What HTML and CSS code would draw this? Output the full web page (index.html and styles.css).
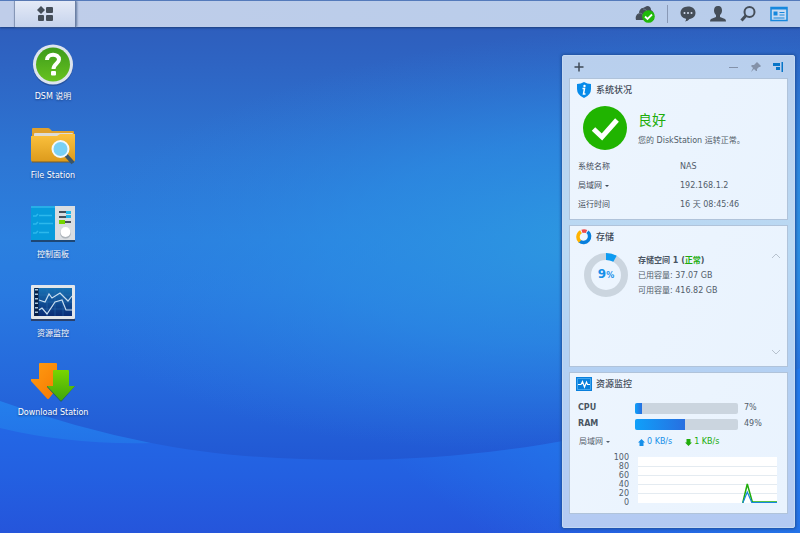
FILE: index.html
```
<!DOCTYPE html>
<html lang="zh-CN">
<head>
<meta charset="utf-8">
<title>DiskStation</title>
<link rel="stylesheet" href="styles.css">
</head>
<body>
<svg class="wallpaper" viewBox="0 0 800 533" preserveAspectRatio="none" aria-hidden="true">
  <defs>
    <linearGradient id="sky" x1="0" y1="0" x2="0" y2="1">
      <stop offset="0" stop-color="#2e5ab8"/><stop offset=".12" stop-color="#2e64c3"/><stop offset=".3" stop-color="#2d76d4"/><stop offset=".45" stop-color="#2b80df"/><stop offset=".55" stop-color="#297ae1"/><stop offset=".72" stop-color="#2568dc"/><stop offset=".87" stop-color="#2157d3"/>
    </linearGradient>
    <radialGradient id="glow" gradientUnits="userSpaceOnUse" cx="0" cy="0" r="1" gradientTransform="translate(610 238) rotate(-4) scale(560 210)">
      <stop offset="0" stop-color="#2d9ae0" stop-opacity=".95"/><stop offset=".5" stop-color="#2b8fe4" stop-opacity=".6"/><stop offset="1" stop-color="#2b80e0" stop-opacity="0"/>
    </radialGradient>
    <linearGradient id="strip" gradientUnits="userSpaceOnUse" x1="0" y1="400" x2="0" y2="445">
      <stop offset="0" stop-color="#247fec"/><stop offset="1" stop-color="#2373e8"/>
    </linearGradient>
    <linearGradient id="floor" gradientUnits="userSpaceOnUse" x1="0" y1="420" x2="0" y2="533">
      <stop offset="0" stop-color="#2368e6"/><stop offset=".5" stop-color="#2360e1"/><stop offset="1" stop-color="#2555db"/>
    </linearGradient>
    <linearGradient id="rise" gradientUnits="userSpaceOnUse" x1="480" y1="533" x2="600" y2="380">
      <stop offset="0" stop-color="#2386f0" stop-opacity="0"/><stop offset="1" stop-color="#2386f0" stop-opacity=".6"/>
    </linearGradient>
  </defs>
  <rect width="800" height="533" fill="url(#sky)"/>
  <rect width="800" height="533" fill="url(#glow)"/>
  <path d="M0 401Q75 428 151 443V450H0Z" fill="url(#strip)"/>
  <path d="M0 428Q70 445 151 443C210 455 280 460 350 460C520 460 680 424 800 368V533H0Z" fill="url(#floor)"/>
  <path d="M151 443C210 455 280 460 350 460C520 460 680 424 800 368V533H151Z" fill="url(#rise)"/>
</svg>

<header class="taskbar">
  <button class="menu-button" aria-label="主菜单">
    <svg width="16" height="16" viewBox="0 0 16 16" fill="#454e59"><path d="M4 0l4 4-4 4-4-4z"/><rect x="9" y="1" width="7" height="6" rx="1"/><rect x="1" y="9" width="6" height="6" rx="1"/><rect x="9" y="9" width="7" height="6" rx="1"/></svg>
  </button>
  <nav class="tray">
    <button aria-label="同步状态"><svg width="20" height="18" viewBox="0 0 20 18"><path d="M1 15C0 11 2 9 4 8C4 5 6 3 8 3L12 1C15 1 16 3 16 5C18 6 19 8 19 11V15Z" fill="#454e59"/><path d="M3 9C6 7 8 9 8 12M8 4c3 0 4 2 4 3" fill="none" stroke="#8794a8" stroke-width=".6"/><circle cx="13.500" cy="11.500" r="6.300" fill="#20b90a"/><path d="M10 11.500l2.500 2.500 4.500-4.500" fill="none" stroke="#fff" stroke-width="1.800"/></svg></button>
    <span class="divider"></span>
    <button aria-label="通知"><svg width="16" height="16" viewBox="0 0 16 16"><path d="M8 .5c4.500 0 7.500 2.600 7.500 6.200S13 12.500 9.500 13Q8 15 5 15.500Q6.500 14 6 12.700C2.500 12 .5 10 .5 7C.5 3.300 3.500 .5 8 .5Z" fill="#454e59"/><g fill="#d4def0"><circle cx="4.500" cy="7" r="1"/><circle cx="8" cy="7" r="1"/><circle cx="11.500" cy="7" r="1"/></g></svg></button>
    <button aria-label="用户"><svg width="16" height="16" viewBox="0 0 16 16"><path d="M8 0c3 0 4 2 4 4.500C12 7 11 8 10 9v2l5 2q1 .5 1 2.500H0Q0 13.500 1 13l5-2V9C5 8 4 7 4 4.500C4 2 5 0 8 0Z" fill="#454e59"/></svg></button>
    <button aria-label="搜索"><svg width="16" height="16" viewBox="0 0 16 16" fill="none" stroke="#454e59"><circle cx="9.500" cy="6" r="5" stroke-width="2"/><path d="M6 9.500L1.500 14.500" stroke-width="3"/></svg></button>
    <button aria-label="小组件"><svg width="18" height="16" viewBox="0 0 18 16"><rect x="1" y="1.500" width="16" height="13" fill="#c7daf2" stroke="#1688dd" stroke-width="1.500"/><path d="M1 2.500h16" stroke="#1688dd" stroke-width="2"/><rect x="3.500" y="5.500" width="4" height="4" fill="#1688dd"/><path d="M9.500 6.500h5M9.500 9h5M3.500 12h11" stroke="#1688dd"/></svg></button>
  </nav>
</header>

<main class="desktop">
  <nav class="shortcuts">
    <a class="shortcut" href="#help">
      <svg width="44" height="44" viewBox="0 0 44 44"><defs><linearGradient id="green" x1="0" y1="0" x2="0" y2="1"><stop offset="0" stop-color="#3d9b1c"/><stop offset="1" stop-color="#67c21f"/></linearGradient></defs><circle cx="22" cy="23" r="20" fill="#1f3f7c" opacity=".5"/><circle cx="22" cy="21.500" r="20" fill="#dde4ee"/><circle cx="22" cy="21.500" r="17" fill="url(#green)"/><path d="M16 17C16 10 28 10 28 16.500C28 20.500 22.500 20.500 22.500 26" fill="none" stroke="#fff" stroke-width="4"/><rect x="20" y="28" width="5" height="4.500" rx="1" fill="#fff"/></svg>
      <span>DSM 说明</span>
    </a>
    <a class="shortcut" href="#files">
      <svg width="44" height="44" viewBox="0 0 44 44"><defs><linearGradient id="folder" x1="0" y1="0" x2="0" y2="1"><stop offset="0" stop-color="#fcc23e"/><stop offset="1" stop-color="#dc9a1c"/></linearGradient></defs><path d="M1 38V7q0-1 1-1h15q1 0 2 1l2 2h21q1 0 1 1v28Z" fill="#dfa02c"/><path d="M3 12q0-1 1-1h37q1 0 1 1v5H3Z" fill="#dddcd8"/><path d="M0 14h26l3-2h15v26q0 2-2 2H2q-2 0-2-2Z" fill="url(#folder)"/><path d="M1 40h42" stroke="#795d2a"/><path d="M34 32l8 9" stroke="#3b5568" stroke-width="4"/><circle cx="29.500" cy="27" r="8" fill="#79d0f5" stroke="#f3f8fb" stroke-width="2"/></svg>
      <span>File Station</span>
    </a>
    <a class="shortcut" href="#control">
      <svg width="44" height="44" viewBox="0 0 44 44"><path d="M0 38h44v3H0z" fill="#1e4775"/><path d="M0 5h25v34H0z" fill="#079bdc"/><path d="M0 5h25v2H0z" fill="#28aee7"/><path d="M24 5h20v34H24z" fill="#d9dde1"/><path d="M2 15h3l2-2M8 14.500h13M2 23h3l2-2M8 22.500h14M2 32h3l2-2M8 31.500h10" stroke="#2cb8ec" stroke-width="1.500" fill="none"/><g fill="#46505a"><path d="M28 10h7v2h-7zM28 15h7v2h-7zM34 20h6v2h-6z"/></g><path d="M35 10h5v3h-5zM35 14h5v3h-5z" fill="#22b8e8"/><path d="M28 19h6v4h-6z" fill="#75d500"/><circle cx="34.500" cy="32" r="5.500" fill="#aeb5bb"/><circle cx="34.500" cy="31" r="5" fill="#fff"/></svg>
      <span>控制面板</span>
    </a>
    <a class="shortcut" href="#monitor">
      <svg width="44" height="44" viewBox="0 0 44 44"><defs><linearGradient id="screen" x1="0" y1="0" x2="0" y2="1"><stop offset="0" stop-color="#1872b4"/><stop offset="1" stop-color="#0a2c75"/></linearGradient></defs><path d="M0 37h44v4H0z" fill="#29406b"/><rect y="5" width="44" height="34" rx="1" fill="#e3e6ea"/><rect x="3" y="8" width="38" height="28" fill="url(#screen)"/><path d="M5.500 8v28" stroke="#091e42" stroke-width="4"/><path d="M5.500 9v26" stroke="#abc7dc" stroke-width="3" stroke-dasharray="1.500 3"/><path d="M8 15h33M8 22h33M8 29h33M16 8v28M24 8v28M32 8v28" stroke="#2c72b0" stroke-width=".5"/><path d="M8 20l6 2 4-8 3 4 8-5 8 8 4-5M8 30l3-2 5 6 8-12 7-2 4 10h6" fill="none" stroke="#c8def0" stroke-width="1.200"/></svg>
      <span>资源监控</span>
    </a>
    <a class="shortcut" href="#download">
      <svg width="44" height="44" viewBox="0 0 44 44"><defs><linearGradient id="orange" x1="0" y1="0" x2="1" y2="1"><stop offset="0" stop-color="#ff9c12"/><stop offset="1" stop-color="#f57600"/></linearGradient><linearGradient id="lime" x1="0" y1="0" x2="0" y2="1"><stop offset="0" stop-color="#79d500"/><stop offset="1" stop-color="#3fa60b"/></linearGradient></defs><path d="M8 5q0-1 1-1h16q1 0 1 1v17h6L18 39.500q-1 1-2 0L0 22v-2h8Z" fill="url(#orange)"/><path d="M22 13h16v14h6L31 42q-1 1-2 0L16 28v-1h6Z" fill="#215a66"/><path d="M22 12q0-1 1-1h14q1 0 1 1v15h6L31 41q-1 1-2 0L16 27h6Z" fill="url(#lime)"/></svg>
      <span>Download Station</span>
    </a>
  </nav>

  <aside class="panel">
    <div class="panel-bar">
      <button aria-label="添加"><svg width="10" height="10" viewBox="0 0 10 10"><path d="M5 .5v9M.5 5h9" stroke="#3f4a57" stroke-width="1.500"/></svg></button>
      <button class="push" aria-label="最小化"><svg width="10" height="10" viewBox="0 0 10 10"><path d="M0 5.500h9" stroke="#8492a9"/></svg></button>
      <button aria-label="固定"><svg width="10" height="10" viewBox="0 0 10 10" fill="#8492a9"><path d="M6 0l4 4-1 1-1 0-2 2v2l-1 0-2-2-3 3 2-4-2-2 1-1 2 0 2-2Z"/></svg></button>
      <button aria-label="停靠右侧"><svg width="10" height="10" viewBox="0 0 10 10" fill="#0875c7"><path d="M0 1h7v3H0zM3 5h4v3H3zM8.500 0H10v10H8.500z"/></svg></button>
    </div>

    <section class="widget">
      <h2><svg width="16" height="16" viewBox="0 0 16 16"><path d="M8 0Q11 2 15 2V7Q15 13 8 16Q1 13 1 7V2Q5 2 8 0Z" fill="#078bea"/><path d="M6.500 6.500h2L7.500 12h2" fill="none" stroke="#fff" stroke-width="1.500"/><circle cx="8.500" cy="4" r="1.200" fill="#fff"/></svg>系统状况</h2>
      <div class="health">
        <svg width="44" height="44" viewBox="0 0 44 44"><circle cx="22" cy="22" r="22" fill="#20b400"/><path d="M10.500 23l8.500 8 15-17" fill="none" stroke="#fff" stroke-width="5"/></svg>
        <div><strong>良好</strong><p>您的 DiskStation 运转正常。</p></div>
      </div>
      <table class="facts">
        <tr><th scope="row">系统名称</th><td>NAS</td></tr>
        <tr><th scope="row"><button>局域网 <i class="caret"></i></button></th><td>192.168.1.2</td></tr>
        <tr><th scope="row">运行时间</th><td>16 天 08:45:46</td></tr>
      </table>
    </section>

    <section class="widget">
      <h2><svg width="16" height="16" viewBox="0 0 16 16" fill="none" stroke-width="3.500"><path d="M11.500 2.800A6 6 0 1 1 3.500 12" stroke="#087fdc"/><path d="M4 12.500A6 6 0 0 1 5 2.800" stroke="#ffb300"/><path d="M6 2.300A6 6 0 0 1 10.500 2.500" stroke="#f04b4b"/></svg>存储</h2>
      <div class="storage">
        <div class="ring">
          <svg width="44" height="44" viewBox="0 0 44 44" fill="none" stroke-width="7"><circle cx="22" cy="22" r="18.500" stroke="#cbd5df"/><path d="M22 3.500A18.500 18.500 0 0 1 31 5.800" stroke="#0c9bf2"/></svg>
          <span>9<small>%</small></span>
        </div>
        <div class="volume"><strong>存储空间 1 (<em>正常</em>)</strong><p>已用容量: 37.07 GB</p><p>可用容量: 416.82 GB</p></div>
        <div class="scroll">
          <button aria-label="向上"><svg width="10" height="6" viewBox="0 0 10 6"><path d="M1 5l4-4 4 4" fill="none" stroke="#b7c2ce"/></svg></button>
          <button aria-label="向下"><svg width="10" height="6" viewBox="0 0 10 6"><path d="M1 1l4 4 4-4" fill="none" stroke="#b7c2ce"/></svg></button>
        </div>
      </div>
    </section>

    <section class="widget">
      <h2><svg width="16" height="14" viewBox="0 0 16 14"><path d="M0 0h16v14H0z" fill="#087fdc"/><path d="M1.500 1.500h13v11h-13z" fill="none" stroke="#5bb7f5" stroke-width=".7"/><path d="M2 7.500h3l1.500-3L8.500 10l2-5 1 2.500H14" fill="none" stroke="#fff" stroke-width="1.200"/></svg>资源监控</h2>
      <div class="meters">
        <b>CPU</b><div class="meter"><span style="width:7%"></span></div><span>7%</span>
        <b>RAM</b><div class="meter"><span style="width:49%"></span></div><span>49%</span>
      </div>
      <div class="network">
        <button>局域网 <i class="caret"></i></button>
        <span class="up"><svg width="7" height="7" viewBox="0 0 7 7"><path d="M3.500 0L7 3.500H5.500V7h-4V3.500H0Z" fill="currentColor"/></svg> 0 KB/s</span>
        <span class="down"><svg width="7" height="7" viewBox="0 0 7 7"><path d="M3.500 7L7 3.500H5.500V0h-4v3.500H0Z" fill="currentColor"/></svg> 1 KB/s</span>
      </div>
      <div class="chart">
        <div class="axis"><span>100</span><span>80</span><span>60</span><span>40</span><span>20</span><span>0</span></div>
        <svg viewBox="0 0 138 46" preserveAspectRatio="none" aria-hidden="true"><path d="M0 0h138v46H0z" fill="#fff"/><path d="M0 9.500h138M0 18.500h138M0 27.500h138M0 36.500h138" stroke="#e4ebf1"/><path d="M104 46l4.500-19 5 18H138" fill="none" stroke="#20ad0b" stroke-width="1.500"/><path d="M104 46l4.500-11 4.500 10.500H138" fill="none" stroke="#1686dd" stroke-width="1.200"/></svg>
      </div>
    </section>
  </aside>
</main>
</body>
</html>
```
FILE: styles.css
```
* { box-sizing: border-box; }
body {
  margin: 0;
  min-height: 100vh;
  font: 8px/12px "DejaVu Sans", "Noto Sans CJK SC", sans-serif;
  color: #525d6a;
  background: #2553da;
  overflow: hidden;
}
button { border: 0; padding: 0; background: none; font: inherit; color: inherit; display: flex; align-items: center; }
svg { display: block; flex: none; }
p, h2 { margin: 0; }
.wallpaper { position: absolute; inset: 0; width: 100%; height: 100%; z-index: -1; }

.taskbar {
  display: flex;
  justify-content: space-between;
  height: 27px;
  border-top: 1px solid #547abb;
  background: linear-gradient(90deg, #bfcde9, #b8cdeb);
  box-shadow: 0 1px 2px #1c3e7c;
}
.menu-button {
  width: 62px;
  margin-left: 14px;
  justify-content: center;
  border-left: 1px solid #8596b6;
  border-right: 1px solid #6c80a5;
  background: linear-gradient(#e4eaf7, #c6d3ec);
  box-shadow: 1px 0 2px #62789f;
}
.tray { display: flex; align-items: center; gap: 14px; padding-right: 12px; }
.divider { width: 1px; height: 18px; margin: 0 -2px; background: #8999b6; }

.desktop { display: flex; justify-content: space-between; align-items: flex-start; }
.shortcuts { display: flex; flex-direction: column; gap: 19px; padding: 16px 0 0 8px; }
.shortcut {
  display: flex;
  flex-direction: column;
  align-items: center;
  gap: 4px;
  width: 90px;
  color: #fff;
  text-decoration: none;
  text-shadow: 0 1px 2px #173d80;
}
.panel {
  width: 233px;
  margin: 28px 5px 0 0;
  padding: 0 6px 13px;
  border: 1px solid #c3d8f2;
  border-radius: 2px;
  background: linear-gradient(#b9cfed, #bad9f3 40%, #b4d2f3 60%, #b4caf2);
  box-shadow: 0 0 3px 1px #1f4f9c;
}
.panel-bar { display: flex; align-items: center; gap: 12px; height: 22px; padding: 0 5px; }
.push { margin-left: auto; }
.widget {
  height: 142px;
  padding: 3px 6px 0;
  border: 1px solid #b0c3da;
  background: linear-gradient(120deg, #edf5fe, #e9f3fe);
}
.widget + .widget { margin-top: 5px; }
.widget h2 { display: flex; align-items: center; gap: 4px; height: 16px; font-size: 9px; font-weight: 500; color: #3f4a57; }
.health { display: flex; gap: 11px; padding: 8px 7px 0; }
.health strong { display: block; margin-top: 5px; font-size: 14px; line-height: 18px; font-weight: 400; color: #20ad0b; }
.health p { margin-top: 6px; white-space: nowrap; }
.facts { width: 100%; margin-top: 7px; border-collapse: collapse; }
.facts th, .facts td { height: 19px; padding: 0 0 0 2px; text-align: left; font-weight: 400; }
.facts th { width: 102px; color: #3f4a57; }
.caret { display: inline-block; margin-left: 3px; border: 2px solid transparent; border-top-color: currentColor; border-bottom: 0; }

.storage { display: flex; gap: 10px; padding: 8px 0 0 8px; }
.ring { display: grid; place-items: center; width: 44px; height: 44px; }
.ring > * { grid-area: 1 / 1; }
.ring span { font-size: 12px; font-weight: 700; color: #168fe9; }
.ring small { font-size: 8px; }
.volume { flex: 1; line-height: 15px; }
.volume strong { color: #4a5562; }
.volume em { font-style: normal; color: #20ad0b; }
.scroll { display: flex; flex-direction: column; justify-content: space-between; height: 102px; }

.meters { display: grid; grid-template-columns: 51px 103px 1fr; align-items: center; gap: 4px 6px; padding: 10px 0 0 2px; }
.meters b { color: #4a5562; }
.meter { height: 11px; border-radius: 2px; background: #cbd5df; overflow: hidden; }
.meter span { display: block; height: 100%; background: linear-gradient(90deg, #0fa0fa, #286fe0); }
.network { display: flex; align-items: center; gap: 13px; margin: 6px 0 0 3px; }
.network button { width: 46px; }
.network span { display: flex; align-items: center; gap: 2px; }
.up { color: #168fe9; }
.down { color: #20ad0b; }
.chart { display: grid; grid-template-columns: 53px 1fr; gap: 9px; padding: 5px 4px 0 0; }
.axis { display: flex; flex-direction: column; text-align: right; line-height: 9px; }
.chart svg { width: 100%; height: 46px; margin-top: 4px; }
```
